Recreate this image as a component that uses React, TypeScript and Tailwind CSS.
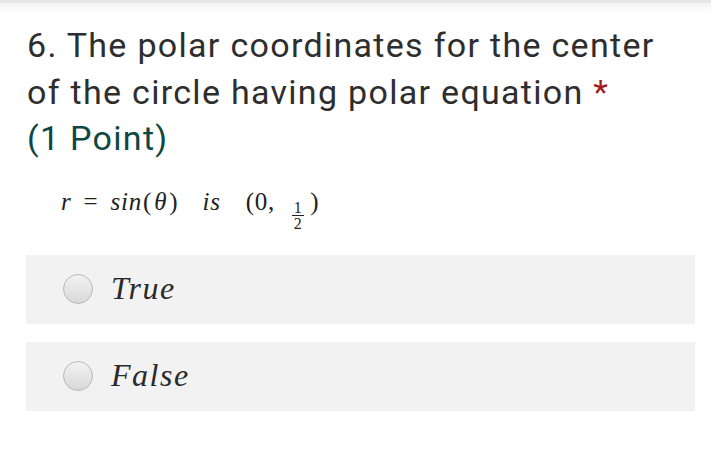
import React from "react";

function Radio() {
  return (
    <span className="block w-[30px] h-[30px] rounded-full border border-[#b8b8b8] bg-gradient-to-b from-[#f2f2f2] to-[#d9d9d9] shrink-0" />
  );
}

function Option({ label }: { label: string }) {
  return (
    <div className="flex items-center h-[69px] bg-[#f2f2f2] pl-[37px] gap-[18px]">
      <Radio />
      <span className="font-['Liberation_Serif',serif] italic text-[32px] tracking-[1.5px] leading-none text-[#2a2a2a] pb-[2px]">
        {label}
      </span>
    </div>
  );
}

export default function App() {
  return (
    <div className="w-[711px] h-[466px] bg-white relative overflow-hidden">
      <div className="h-[3px] bg-[#e6e6e6]" />
      <div className="h-[10px] bg-gradient-to-b from-[#f3f3f3] to-white" />
      <div className="pl-[27px] pr-[8px] pt-[9px]">
        <div className="font-['Roboto',sans-serif] text-[34px] tracking-[1.3px] leading-[46.5px] text-[#2e2e2e] whitespace-nowrap">
          <div>6. The polar coordinates for the center</div>
          <div>
            of the circle having polar equation{" "}
            <span className="text-[#a41c1c]">*</span>
          </div>
          <div className="text-[#0e4744]">(1 Point)</div>
        </div>
      </div>
      <div className="pl-[61px] pt-[25px] h-[93px] font-['Liberation_Serif',serif] text-[25px] leading-[30px] text-[#222] tracking-[0.8px] whitespace-nowrap">
        <span className="italic">r</span>
        <span className="ml-[12px]">=</span>
        <span className="italic ml-[12px]">sin</span>
        <span className="ml-[1px]">(</span>
        <span className="italic mx-[2px]">θ</span>
        <span>)</span>
        <span className="italic ml-[24px]">is</span>
        <span className="ml-[25px]">(0,</span>
        <span className="inline-flex flex-col items-center align-[-3px] ml-[17px] text-[16px] leading-[13px]">
          <span>1</span>
          <span className="w-[12px] h-[1px] bg-[#222] my-[1px]" />
          <span>2</span>
        </span>
        <span className="ml-[6px]">)</span>
      </div>
      <div className="pl-[26px] w-[695px] flex flex-col gap-[18px]">
        <Option label="True" />
        <Option label="False" />
      </div>
    </div>
  );
}
